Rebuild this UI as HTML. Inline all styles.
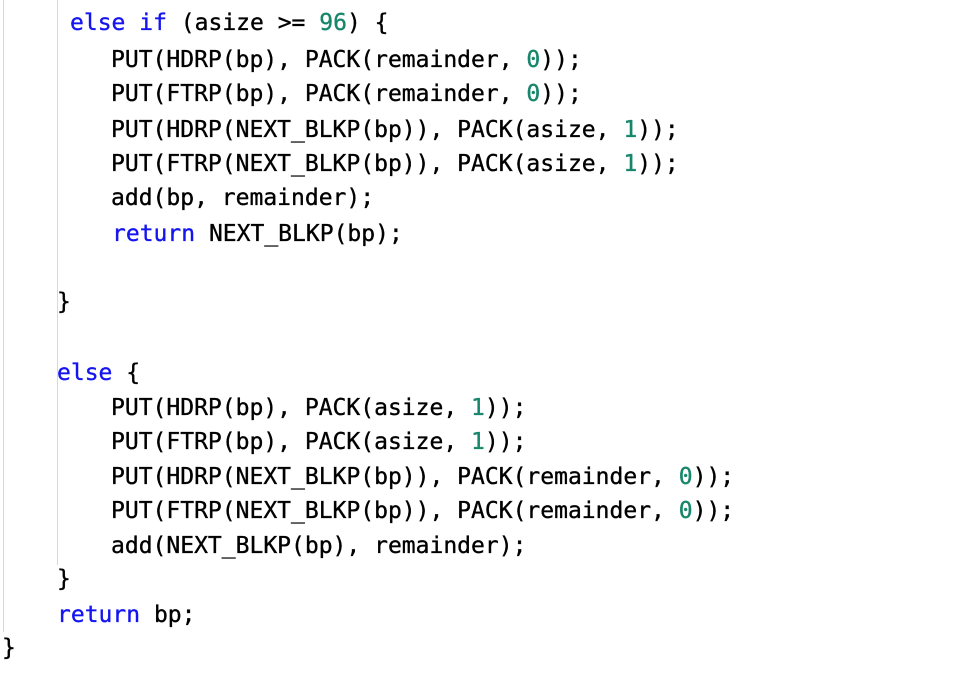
<html><head><style>
body{margin:0;width:964px;height:690px;background:#fff;position:relative;overflow:hidden;font-family:"DejaVu Sans Mono","Liberation Mono",monospace;font-size:23px;color:#000;-webkit-text-stroke:0.35px currentColor}
.l{position:absolute;white-space:pre;line-height:34px;height:34px}
.k{color:#1515f0}.n{color:#17866a}
.g{position:absolute;width:1px;background:#d8d8d8;top:0}
</style></head><body>
<div class="g" style="left:3px;height:632px"></div>
<div class="g" style="left:57px;height:565px"></div>
<div class="l" style="left:70px;top:6px"><span class="k">else if</span> (asize &gt;= <span class="n">96</span>) {</div>
<div class="l" style="left:111px;top:43px">PUT(HDRP(bp), PACK(remainder, <span class="n">0</span>));</div>
<div class="l" style="left:111px;top:77px">PUT(FTRP(bp), PACK(remainder, <span class="n">0</span>));</div>
<div class="l" style="left:111px;top:113px">PUT(HDRP(NEXT_BLKP(bp)), PACK(asize, <span class="n">1</span>));</div>
<div class="l" style="left:111px;top:147px">PUT(FTRP(NEXT_BLKP(bp)), PACK(asize, <span class="n">1</span>));</div>
<div class="l" style="left:111px;top:181px">add(bp, remainder);</div>
<div class="l" style="left:112px;top:217px"><span class="k">return</span> NEXT_BLKP(bp);</div>
<div class="l" style="left:57px;top:285px">}</div>
<div class="l" style="left:57px;top:356px"><span class="k">else</span> {</div>
<div class="l" style="left:111px;top:391px">PUT(HDRP(bp), PACK(asize, <span class="n">1</span>));</div>
<div class="l" style="left:111px;top:425px">PUT(FTRP(bp), PACK(asize, <span class="n">1</span>));</div>
<div class="l" style="left:111px;top:460px">PUT(HDRP(NEXT_BLKP(bp)), PACK(remainder, <span class="n">0</span>));</div>
<div class="l" style="left:111px;top:494px">PUT(FTRP(NEXT_BLKP(bp)), PACK(remainder, <span class="n">0</span>));</div>
<div class="l" style="left:111px;top:529px">add(NEXT_BLKP(bp), remainder);</div>
<div class="l" style="left:57px;top:562px">}</div>
<div class="l" style="left:57px;top:598px"><span class="k">return</span> bp;</div>
<div class="l" style="left:2px;top:631px">}</div>
</body></html>
